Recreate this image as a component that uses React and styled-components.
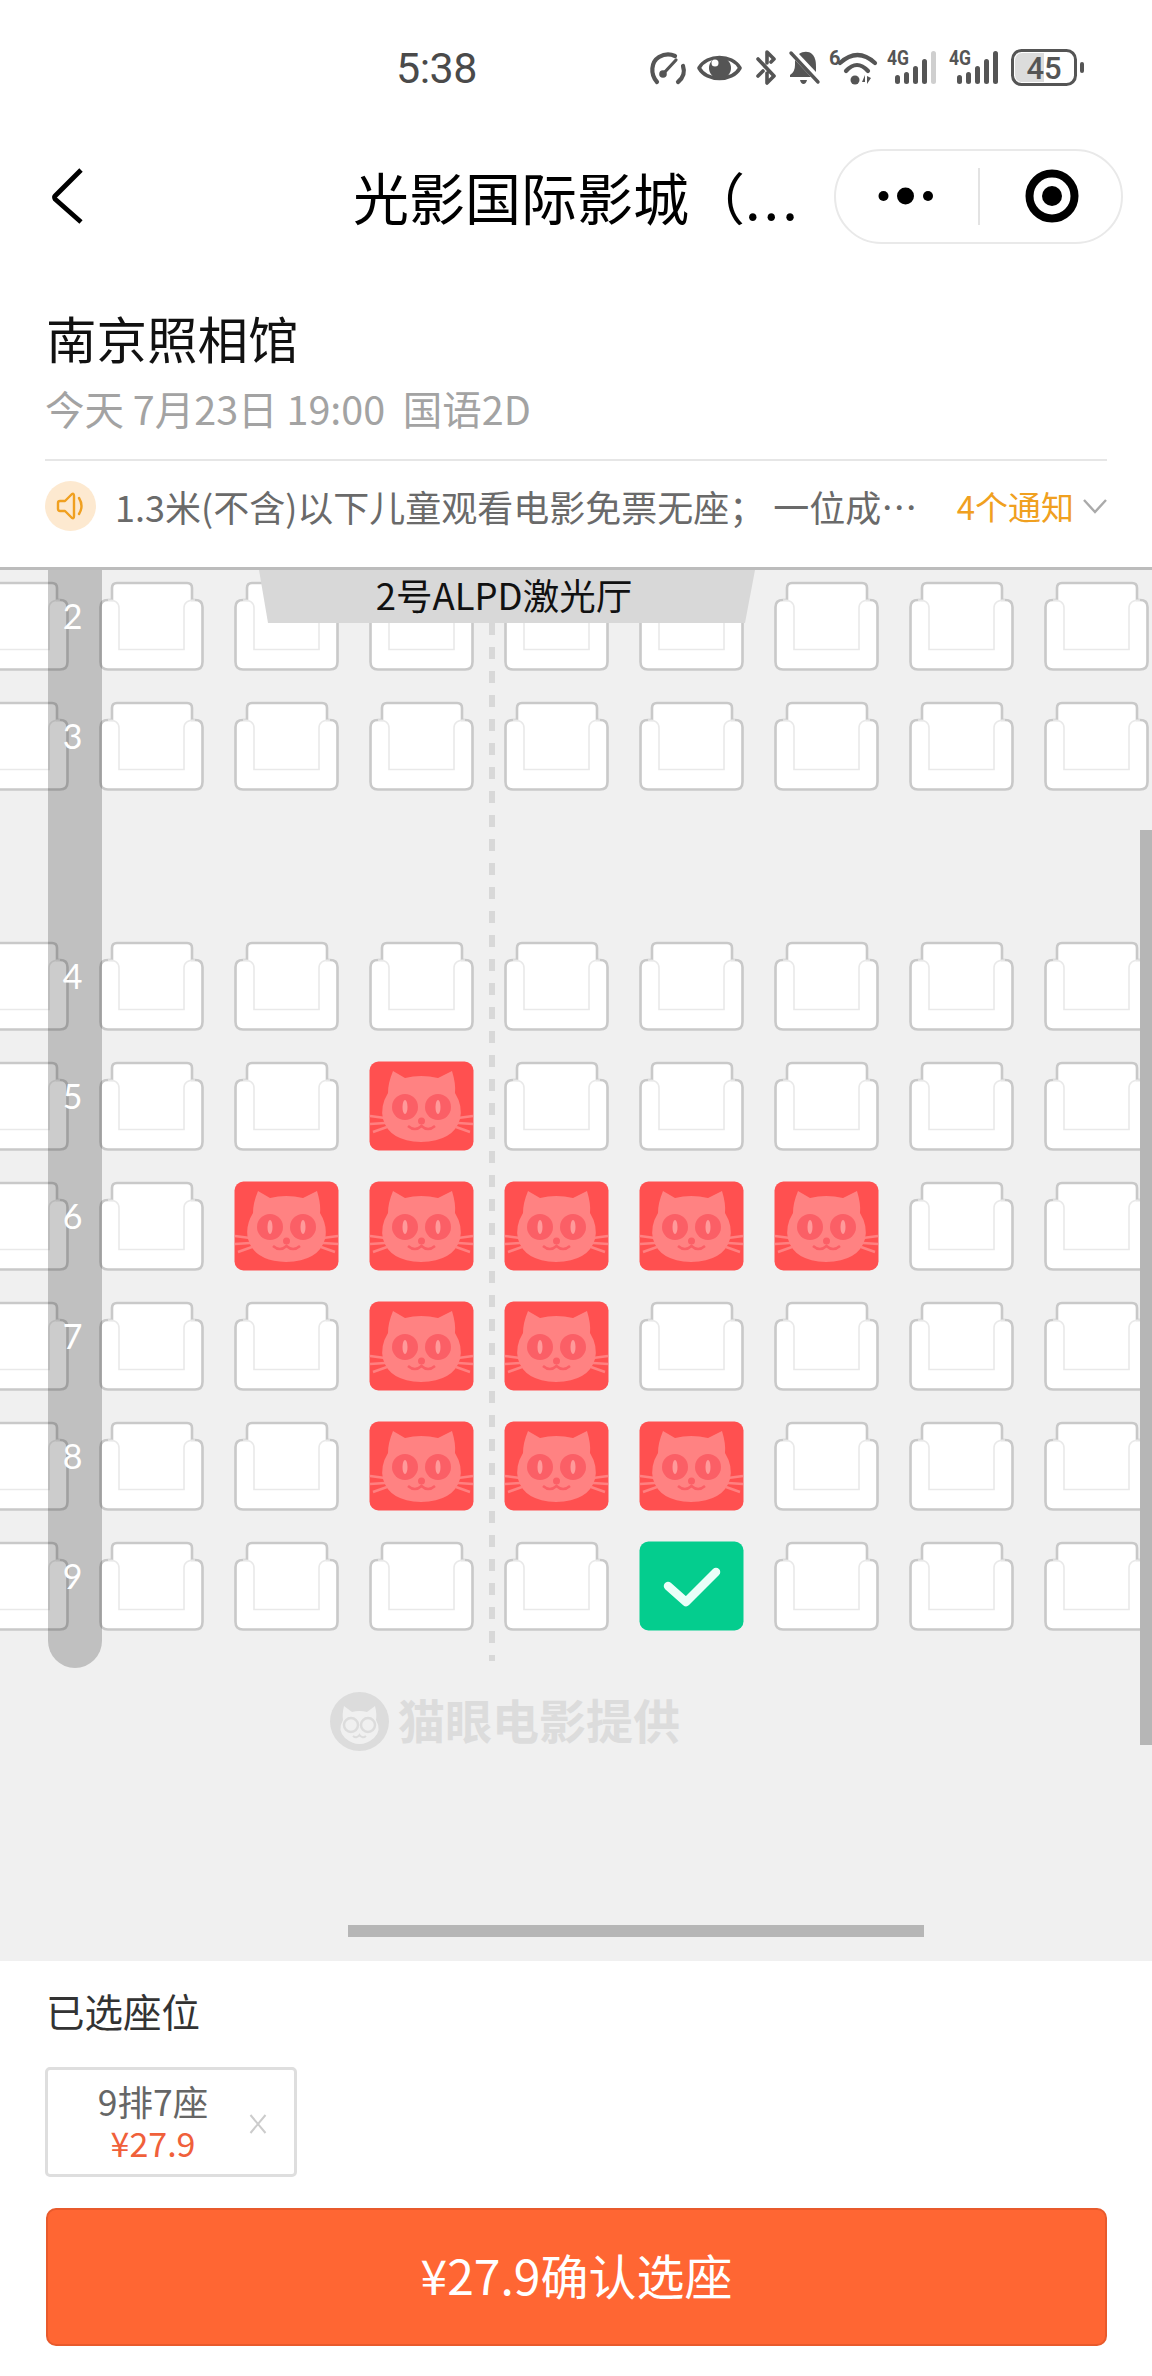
import React from 'react';
import styled, { createGlobalStyle } from 'styled-components';

const Global = createGlobalStyle`
  html, body { margin: 0; padding: 0; background: #fff; }
  * { box-sizing: border-box; }
  body { font-family: "Noto Sans CJK SC", "Noto Sans", sans-serif; }
`;

const Page = styled.div`
  width: 1152px;
  height: 2376px;
  display: flex;
  flex-direction: column;
  background: #fff;
  overflow: hidden;
`;

const StatusBar = styled.div`
  height: 148px;
  padding: 49px 68px 0 396px;
  display: flex;
  align-items: flex-start;
  justify-content: space-between;
`;
const Time = styled.div`
  font-family: Roboto, sans-serif;
  font-size: 43px;
  line-height: 38px;
  font-weight: 400;
  color: #4a4a4a;
  letter-spacing: -0.5px;
`;
const StatusIcons = styled.div`
  display: flex;
  align-items: center;
  height: 37px;
`;
const StatusIcon = styled.svg`
  flex: none;
  width: ${(p) => p.$w}px;
  height: 37px;
  margin-left: ${(p) => p.$gap || 0}px;
  display: block;
  overflow: visible;
`;

const NavBar = styled.div`
  height: 96px;
  padding: 0 29px 0 50px;
  display: flex;
  align-items: center;
`;
const BackIcon = styled.svg`
  width: 36px;
  height: 60px;
  flex: none;
`;
const NavTitle = styled.div`
  margin-left: 267px;
  font-size: 56px;
  line-height: 60px;
  color: #000;
  white-space: nowrap;
`;
const TitleEllipsis = styled.span`
  letter-spacing: 3px;
`;
const Capsule = styled.div`
  margin-left: auto;
  width: 289px;
  height: 95px;
  border: 2px solid #e9e9e9;
  border-radius: 48px;
  padding-left: 42px;
  display: flex;
  align-items: center;
  flex: none;
`;
const CapsuleDots = styled.svg`
  width: 55px;
  height: 20px;
  flex: none;
`;
const CapsuleDivider = styled.div`
  width: 2px;
  height: 57px;
  margin-left: 45px;
  background: #e3e3e3;
  flex: none;
`;
const CapsuleTarget = styled.svg`
  width: 54px;
  height: 54px;
  margin-left: 45px;
  flex: none;
`;

const MovieInfo = styled.div`
  height: 217px;
  margin: 0 45px;
  padding-top: 58px;
  border-bottom: 2px solid #e6e6e6;
`;
const MovieTitle = styled.div`
  margin-left: 1px;
  font-size: 50.5px;
  line-height: 70px;
  color: #111;
`;
const MovieMeta = styled.div`
  margin-top: 12px;
  font-size: 39.5px;
  line-height: 48px;
  color: #a3a3a3;
  white-space: pre;
`;

const Notice = styled.div`
  height: 106px;
  padding: 0 45px 16px;
  display: flex;
  align-items: center;
`;
const NoticeBadge = styled.div`
  width: 51px;
  height: 50px;
  border-radius: 50%;
  background: #fde9d0;
  display: flex;
  align-items: center;
  justify-content: center;
  flex: none;
`;
const NoticeText = styled.div`
  margin-left: 19px;
  width: 804px;
  font-size: 36px;
  line-height: 48px;
  color: #6a6a6a;
  white-space: nowrap;
  flex: none;
`;
const NoticeCount = styled.div`
  margin-left: auto;
  font-size: 33px;
  line-height: 48px;
  color: #f0a020;
  white-space: nowrap;
`;
const NoticeChevron = styled.svg`
  width: 24px;
  height: 16px;
  margin-left: 9px;
  flex: none;
`;

const SeatMap = styled.div`
  position: relative;
  flex: 1;
  background: #f0f0f0;
  border-top: 3px solid #bcbcbc;
  overflow: hidden;
`;
const SeatGrid = styled.div`
  margin-left: -36px;
  padding-top: 11px;
  display: flex;
  flex-direction: column;
  gap: 30px;
`;
const SeatRow = styled.div`
  display: flex;
  gap: 30px;
  height: 90px;
`;
const SeatSvg = styled.svg`
  width: 105px;
  height: 90px;
  flex: none;
  display: block;
  filter: ${(p) => (p.$soft ? 'blur(0.7px)' : 'none')};
`;

const ScreenLabel = styled.div`
  position: absolute;
  top: 0;
  left: 259px;
  width: 496px;
  height: 53px;
  padding: 0 6px 3px 0;
  background: #d8d8d8;
  clip-path: polygon(0 0, 100% 0, 486px 100%, 9px 100%);
  display: flex;
  align-items: center;
  justify-content: center;
  font-size: 36.5px;
  line-height: 48px;
  color: #111;
  white-space: nowrap;
`;
const CenterLine = styled.div`
  position: absolute;
  top: 53px;
  left: 489px;
  width: 6px;
  height: 1038px;
  background: repeating-linear-gradient(to bottom, #d8d8d8 0 12px, transparent 12px 24px);
`;
const RowBar = styled.div`
  position: absolute;
  top: 0;
  left: 48px;
  width: 54px;
  height: 1098px;
  padding: 34px 5px 0 0;
  border-radius: 0 0 27px 27px;
  background: rgba(0, 0, 0, 0.2);
  display: flex;
  flex-direction: column;
  gap: 96px;
`;
const RowLabel = styled.div`
  height: 24px;
  font-family: Lato, sans-serif;
  font-size: 34px;
  line-height: 24px;
  color: #fff;
  text-align: center;
`;
const Watermark = styled.div`
  margin: 61px 0 0 330px;
  display: flex;
  align-items: center;
  gap: 9px;
  height: 59px;
`;
const WatermarkLogo = styled.svg`
  width: 59px;
  height: 59px;
  flex: none;
`;
const WatermarkText = styled.div`
  margin-top: -6px;
  font-size: 47px;
  line-height: 59px;
  font-weight: 700;
  color: #dcdcdc;
  white-space: nowrap;
`;
const VScroll = styled.div`
  position: absolute;
  top: 260px;
  right: 0;
  width: 12px;
  height: 915px;
  background: #b6b6b6;
`;
const HScroll = styled.div`
  position: absolute;
  left: 348px;
  bottom: 24px;
  width: 576px;
  height: 12px;
  background: #b6b6b6;
`;

const Bottom = styled.div`
  height: 415px;
  padding: 0 45px;
  display: flex;
  flex-direction: column;
  background: #fff;
`;
const SelectedTitle = styled.div`
  margin: 24px 0 0 1px;
  font-size: 38.5px;
  line-height: 50px;
  color: #333;
`;
const SeatChip = styled.div`
  position: relative;
  margin-top: 32px;
  width: 252px;
  height: 110px;
  border: 3px solid #dedede;
  border-radius: 5px;
  padding-right: 36px;
  display: flex;
  flex-direction: column;
  align-items: center;
  justify-content: center;
`;
const ChipSeat = styled.div`
  font-size: 35.5px;
  line-height: 42px;
  color: #666;
`;
const ChipPrice = styled.div`
  font-size: 34px;
  line-height: 42px;
  color: #f0603a;
`;
const ChipClose = styled.svg`
  position: absolute;
  right: 27px;
  top: 44px;
  width: 18px;
  height: 20px;
`;
const ConfirmButton = styled.div`
  margin: 31px 0 0 1px;
  width: 1061px;
  height: 138px;
  padding-bottom: 6px;
  border: 2px solid #e85a2c;
  border-radius: 10px;
  background: #ff6633;
  display: flex;
  align-items: center;
  justify-content: center;
  font-size: 48px;
  line-height: 60px;
  color: #fff;
`;

const Seat = ({ kind }) => {
  if (kind === 'sold') {
    return (
      <SeatSvg viewBox="0 0 105 90" $soft>
        <rect x="0.500" y="0.500" width="104" height="89" rx="9" fill="#ff5050" />
        <g stroke="#ff8080" strokeWidth="2.500" fill="none">
          <path d="M1 55 L16 57 M1 63 L16 62 M4 71 L18 66" />
          <path d="M104 55 L89 57 M104 63 L89 62 M101 71 L87 66" />
        </g>
        <path
          d="M24 10 L36 17 Q52 13 69 17 L83 10 Q87 23 86 32 Q94 45 91 58 Q85 80 52 81 Q20 80 14 58 Q11 45 19 32 Q19 22 24 10 Z"
          fill="#ff8282"
        />
        <circle cx="36" cy="46" r="13" fill="#fb5f66" />
        <circle cx="69" cy="46" r="13" fill="#fb5f66" />
        <ellipse cx="36" cy="46" rx="2.500" ry="7" fill="#ff9a9a" />
        <ellipse cx="69" cy="46" rx="2.500" ry="7" fill="#ff9a9a" />
        <circle cx="52.500" cy="60" r="3.500" fill="#fb5f66" />
        <path d="M39 65 Q46 71 52.500 65 Q59 71 66 65" fill="none" stroke="#fb5f66" strokeWidth="2.500" />
      </SeatSvg>
    );
  }
  if (kind === 'selected') {
    return (
      <SeatSvg viewBox="0 0 105 90" $soft>
        <rect x="0.500" y="0.500" width="104" height="89" rx="9" fill="#04cd8e" />
        <path d="M29 45 L47 61 L77 31" fill="none" stroke="#eafff9" strokeWidth="8.500" strokeLinecap="round" strokeLinejoin="round" />
      </SeatSvg>
    );
  }
  return (
    <SeatSvg viewBox="0 0 105 90">
      <path
        d="M13 19 V7 Q13 2 18 2 H88 Q93 2 93 7 V19 H96 Q103.500 19 103.500 26 V81 Q103.500 88.500 96 88.500 H9 Q1.500 88.500 1.500 81 V26 Q1.500 19 9 19 Z"
        fill="#fff"
        stroke="#c9c9c9"
        strokeWidth="2.600"
      />
      <path d="M9 19 Q20 19 20 27 V68.500 H85 V27 Q85 19 96 19" fill="none" stroke="#e9e9e9" strokeWidth="1.600" />
    </SeatSvg>
  );
};

const SOLD = { 5: [3], 6: [2, 3, 4, 5, 6], 7: [3, 4], 8: [3, 4, 5] };
const ROWS = ['2', '3', '', '4', '5', '6', '7', '8', '9'];
const COLUMNS = [0, 1, 2, 3, 4, 5, 6, 7, 8];

const seatKind = (row, col) => {
  if (row === '9' && col === 5) return 'selected';
  return (SOLD[row] || []).includes(col) ? 'sold' : 'free';
};

const Signal = ({ gap, last }) => (
  <StatusIcon $w={49} $gap={gap} viewBox="0 0 49 37">
    <text x="0" y="16" fontFamily="Roboto, sans-serif" fontWeight="700" fontSize="20" fill="#555" textLength="22" lengthAdjust="spacingAndGlyphs">4G</text>
    <rect x="8" y="26" width="5" height="9" rx="2.500" fill="#555" />
    <rect x="17" y="23" width="5" height="12" rx="2.500" fill="#555" />
    <rect x="26" y="17" width="5" height="18" rx="2.500" fill="#555" />
    <rect x="35" y="10" width="5" height="25" rx="2.500" fill="#555" />
    <rect x="44" y="2" width="5" height="33" rx="2.500" fill={last} />
  </StatusIcon>
);

export default function App() {
  return (
    <Page>
      <Global />
      <StatusBar>
        <Time>5:38</Time>
        <StatusIcons>
          <StatusIcon $w={35} viewBox="0 0 35 37">
            <path d="M7 33 C0 25 1 13 9 8 C14 5 20 4.500 25 7" fill="none" stroke="#555" strokeWidth="4.200" strokeLinecap="round" />
            <path d="M33 17 C35 23 33 29 28 33" fill="none" stroke="#555" strokeWidth="4.200" strokeLinecap="round" />
            <path d="M13 25 L26 11" fill="none" stroke="#555" strokeWidth="3.200" strokeLinecap="round" />
            <circle cx="13" cy="25" r="3.800" fill="#555" />
          </StatusIcon>
          <StatusIcon $w={45} $gap={12} viewBox="0 0 45 37">
            <path d="M2 19 C10 5 35 5 43 19 C35 33 10 33 2 19 Z" fill="none" stroke="#555" strokeWidth="3.600" strokeLinejoin="round" />
            <circle cx="23" cy="19" r="11" fill="#555" />
            <circle cx="18" cy="14" r="3.500" fill="#fff" />
          </StatusIcon>
          <StatusIcon $w={22} $gap={13} viewBox="0 0 22 37">
            <path d="M3 10 L19 27 L12 34 V24 M12 14 V3 L19 10 L16 13 M3 27 L8 22" fill="none" stroke="#555" strokeWidth="3.600" strokeLinecap="round" strokeLinejoin="round" />
          </StatusIcon>
          <StatusIcon $w={30} $gap={12} viewBox="0 0 30 37">
            <path d="M6 11 L22 28 H1 V26 Q6 23 6 16 Z" fill="#555" />
            <path d="M10 5 C14 2 20 2 23 5 C27 9 27 14 27 20 L27 23 Z" fill="#555" />
            <path d="M2 4 L29 33" stroke="#555" strokeWidth="3.400" strokeLinecap="round" />
            <path d="M11 31 H18 Q17 35 14.500 35 Q12 35 11 31 Z" fill="#555" />
          </StatusIcon>
          <StatusIcon $w={47} $gap={10} viewBox="0 0 47 37">
            <text x="0" y="16" fontFamily="Roboto, sans-serif" fontWeight="700" fontSize="20" fill="#555">6</text>
            <path d="M11 14 Q28.500 -2 46 14" fill="none" stroke="#555" strokeWidth="4.200" strokeLinecap="round" />
            <path d="M17 22 Q28 10 39 22" fill="none" stroke="#555" strokeWidth="4.200" strokeLinecap="round" />
            <circle cx="26" cy="31" r="4.500" fill="#555" />
            <path d="M33 33 L36 26 V33 Z M38 27 V35 L42 29 Z" fill="#555" />
          </StatusIcon>
          <Signal gap={11} last="#cfcfcf" />
          <Signal gap={13} last="#555" />
          <StatusIcon $w={73} $gap={13} viewBox="0 0 73 37">
            <rect x="1.500" y="1.500" width="63" height="34" rx="9" fill="#fff" stroke="#555" strokeWidth="3" />
            <path d="M4 12 Q4 4 12 4 H33 V33 H12 Q4 33 4 25 Z" fill="#dcdcdc" />
            <rect x="69" y="13" width="4" height="11" rx="2" fill="#555" />
            <text x="33" y="30" textAnchor="middle" fontFamily="Roboto, sans-serif" fontWeight="500" fontSize="31" fill="#555">45</text>
          </StatusIcon>
        </StatusIcons>
      </StatusBar>

      <NavBar>
        <BackIcon viewBox="0 0 36 60">
          <path d="M31 4 L5 30 Q4 31 5 33 L31 56" fill="none" stroke="#000" strokeWidth="4.800" />
        </BackIcon>
        <NavTitle>光影国际影城（<TitleEllipsis>...</TitleEllipsis></NavTitle>
        <Capsule>
          <CapsuleDots viewBox="0 0 55 20">
            <circle cx="5.500" cy="10" r="5" fill="#000" />
            <circle cx="27.500" cy="10" r="8.500" fill="#000" />
            <circle cx="50" cy="10" r="5" fill="#000" />
          </CapsuleDots>
          <CapsuleDivider />
          <CapsuleTarget viewBox="0 0 54 54">
            <circle cx="27" cy="27" r="22.500" fill="none" stroke="#000" strokeWidth="8" />
            <circle cx="27" cy="27" r="10" fill="#000" />
          </CapsuleTarget>
        </Capsule>
      </NavBar>

      <MovieInfo>
        <MovieTitle>南京照相馆</MovieTitle>
        <MovieMeta>今天 7月23日 19:00  国语2D</MovieMeta>
      </MovieInfo>

      <Notice>
        <NoticeBadge>
          <svg width="30" height="32" viewBox="0 0 30 32">
            <path d="M4 11 H9 L16 4 Q18 3 18 6 V26 Q18 29 16 28 L9 21 H4 Q2 21 2 19 V13 Q2 11 4 11 Z" fill="none" stroke="#f0a020" strokeWidth="2.400" strokeLinejoin="round" />
            <path d="M23 8 Q28 16 23 24" fill="none" stroke="#f0a020" strokeWidth="2.400" strokeLinecap="round" />
          </svg>
        </NoticeBadge>
        <NoticeText>1.3米(不含)以下儿童观看电影免票无座；  一位成…</NoticeText>
        <NoticeCount>4个通知</NoticeCount>
        <NoticeChevron viewBox="0 0 24 16">
          <path d="M1 2 L12 14 L23 2" fill="none" stroke="#aaa" strokeWidth="2.400" />
        </NoticeChevron>
      </Notice>

      <SeatMap>
        <SeatGrid>
          {ROWS.map((row, i) => (
            <SeatRow key={i}>
              {row && COLUMNS.map((col) => <Seat key={col} kind={seatKind(row, col)} />)}
            </SeatRow>
          ))}
        </SeatGrid>
        <Watermark>
          <WatermarkLogo viewBox="0 0 59 59">
            <circle cx="29.500" cy="29.500" r="29.500" fill="#dcdcdc" />
            <path d="M14 14 L22 20 Q29.500 18 37 20 L45 14 Q47 22 46 28 Q52 38 44 46 Q37 52 29.500 52 Q22 52 15 46 Q7 38 13 28 Q12 22 14 14 Z" fill="#f0f0f0" />
            <circle cx="21" cy="33" r="7" fill="none" stroke="#dcdcdc" strokeWidth="2.500" />
            <circle cx="38" cy="33" r="7" fill="none" stroke="#dcdcdc" strokeWidth="2.500" />
            <path d="M23 44 Q26.500 47 29.500 43 Q32.500 47 36 44" fill="none" stroke="#dcdcdc" strokeWidth="2" />
          </WatermarkLogo>
          <WatermarkText>猫眼电影提供</WatermarkText>
        </Watermark>
        <CenterLine />
        <RowBar>
          {ROWS.map((row, i) => (
            <RowLabel key={i}>{row}</RowLabel>
          ))}
        </RowBar>
        <ScreenLabel>2号ALPD激光厅</ScreenLabel>
        <VScroll />
        <HScroll />
      </SeatMap>

      <Bottom>
        <SelectedTitle>已选座位</SelectedTitle>
        <SeatChip>
          <ChipSeat>9排7座</ChipSeat>
          <ChipPrice>¥27.9</ChipPrice>
          <ChipClose viewBox="0 0 18 20">
            <path d="M1.500 1 L16.500 19 M16.500 1 L1.500 19" stroke="#ccc" strokeWidth="2" />
          </ChipClose>
        </SeatChip>
        <ConfirmButton>¥27.9确认选座</ConfirmButton>
      </Bottom>
    </Page>
  );
}
